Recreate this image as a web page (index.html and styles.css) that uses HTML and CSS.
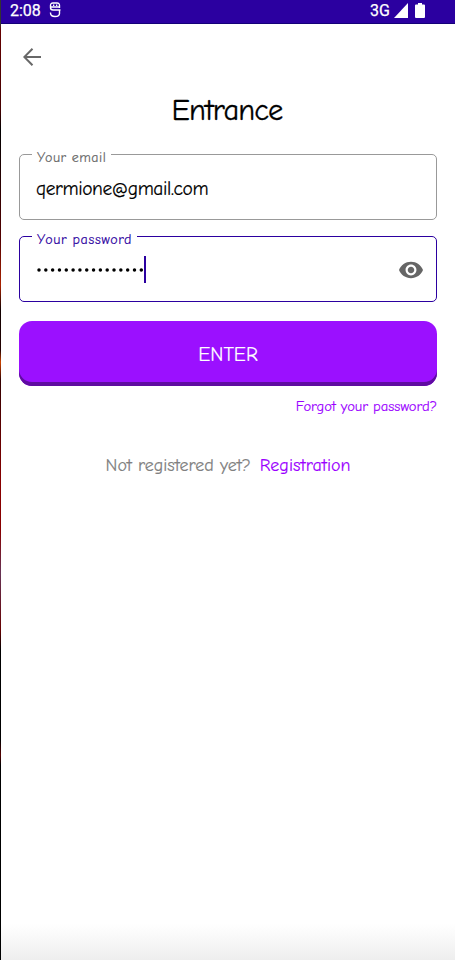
FILE: index.html
```html
<!DOCTYPE html>
<html lang="en">
<head>
<meta charset="utf-8">
<title>Entrance</title>
<link rel="stylesheet" href="styles.css">
</head>
<body>
<div class="edge"></div>
<div class="screen">
  <header class="status">
    <span class="time">2:08</span>
    <svg class="debug" width="12" height="16" viewBox="0 0 12 16" fill="none" stroke="#fff" stroke-width="1.400"><path d="M10.500 6V3.500Q10.500 1 8 1H4Q1.500 1 1.500 3.500V5.500Q1.500 8 4 8H11.500M10.500 8V11.500Q10.500 14.500 6 14.500Q1.500 14.500 1.500 11V10.500M1 5H11M4 3.200H5.300M7 3.200H8.300"/></svg>
    <span class="network">3G</span>
    <svg class="signal" width="14" height="15" viewBox="0 0 14 15"><path d="M14 0V15H0Z" fill="#fff"/></svg>
    <svg class="battery" width="10" height="15" viewBox="0 0 10 15"><path d="M3 0H7V1.500H9Q10 1.500 10 2.500V14Q10 15 9 15H1Q0 15 0 14V2.500Q0 1.500 1 1.500H3Z" fill="#fff"/></svg>
  </header>
  <main>
    <svg class="back" width="18" height="18" viewBox="0 0 18 18" fill="none" stroke="#686868" stroke-width="2"><path d="M18 9H1.500M9.500 .7L1.300 9L9.500 17.300"/></svg>
    <h1>Entrance</h1>
    <fieldset class="field">
      <legend><span class="email-label">Your email</span></legend>
      <div class="row"><span class="email">qermione@gmail.com</span></div>
    </fieldset>
    <fieldset class="field active">
      <legend><span class="password-label">Your password</span></legend>
      <div class="row">
        <svg class="dots" width="108" height="6" viewBox="0 0 108 6"><path d="M3 3H107" stroke="#000" stroke-width="3.500" stroke-linecap="round" stroke-dasharray="0 6.820"/></svg>
        <span class="caret"></span>
        <svg class="eye" width="24" height="18" viewBox="1 4 22 16"><path d="M12 4.500C7 4.500 2.730 7.610 1 12c1.730 4.390 6 7.500 11 7.500s9.270-3.110 11-7.500c-1.730-4.390-6-7.500-11-7.500zM12 17c-2.760 0-5-2.240-5-5s2.240-5 5-5 5 2.240 5 5-2.240 5-5 5zm0-8c-1.660 0-3 1.340-3 3s1.340 3 3 3 3-1.340 3-3-1.340-3-3-3z" fill="#666"/></svg>
      </div>
    </fieldset>
    <button class="enter">ENTER</button>
    <a class="forgot">Forgot your password?</a>
    <p class="register"><span class="question">Not registered yet?</span><a class="registration">Registration</a></p>
  </main>
</div>
</body>
</html>
```
FILE: styles.css
```css
* { box-sizing: border-box; }
body {
  margin: 0;
  height: 960px;
  display: flex;
  overflow: hidden;
  font-family: "Comic Neue", "Comic Sans MS", Lato, sans-serif;
  color: #000;
}
.edge {
  width: 1px;
  background: linear-gradient(#333 0 24px, #600 30px, #400 110px, #000 130px, #500 240px, #a20 285px, #100 310px, #200 350px, #c40 362px, #300 380px, #800 480px, #800 530px, #635 573px, #600 630px, #000 650px, #000 740px, #500 755px, #000 765px);
}
.screen {
  flex: 1;
  background: linear-gradient(#fff 0 924px, #eee 960px);
}
.status {
  display: flex;
  height: 24px;
  padding: 0 30px 3px 9px;
  align-items: center;
  background: #2b00a0;
  border-bottom: 1px solid #140078;
  color: #fff;
  font-family: Roboto, sans-serif;
  font-size: 16px;
}
.time, .network { -webkit-text-stroke: .25px currentColor; }
.debug { margin-left: 8px; }
.network { margin-left: auto; }
.signal { margin-left: 4px; }
.battery { margin-left: 7px; }
main {
  display: flex;
  flex-direction: column;
  padding: 24px 18px 0;
  -webkit-text-stroke: .15px currentColor;
}
.back { margin-left: 4px; }
h1 {
  margin: 28px 0 0;
  height: 34px;
  line-height: 34px;
  font-size: 30.5px;
  font-weight: 400;
  letter-spacing: -.9px;
  text-align: center;
  text-indent: -2px;
  -webkit-text-stroke: .3px currentColor;
}
.field {
  min-width: 0;
  height: 74px;
  margin: 18px 0 0;
  padding: 0 13px 0 12px;
  border: 1px solid #999;
  border-radius: 5px;
}
.field legend {
  height: 16px;
  padding: 0 5px;
  line-height: 24px;
  font-size: 14px;
  color: #666;
}
.email-label { letter-spacing: .5px; }
.password-label { letter-spacing: .65px; }
.row {
  display: flex;
  align-items: center;
  height: 51px;
}
.email {
  margin-left: 4px;
  padding-top: 1px;
  font-size: 19.5px;
  letter-spacing: -.4px;
}
.active { margin-top: 8px; border-color: #2b00a0; }
.active legend { color: #2b00a0; }
.dots { margin-left: 4px; }
.caret { width: 2px; height: 27px; background: #2b00a0; }
.eye { margin-left: auto; }
.enter {
  height: 65px;
  margin-top: 19px;
  padding: 2px 0 0;
  border: 0;
  border-radius: 13px;
  background: #9b10ff;
  box-shadow: inset 0 -4px #5f0ca0;
  color: #fff;
  font: inherit;
  font-size: 20px;
}
.forgot {
  align-self: flex-end;
  margin-top: 12px;
  line-height: 18px;
  font-size: 14.6px;
  color: #9b00ff;
}
.register {
  display: flex;
  justify-content: center;
  gap: 9px;
  margin: 39px 0 0;
  line-height: 22px;
  font-size: 18px;
  color: #808080;
}
.registration { color: #9b00ff; }
```
